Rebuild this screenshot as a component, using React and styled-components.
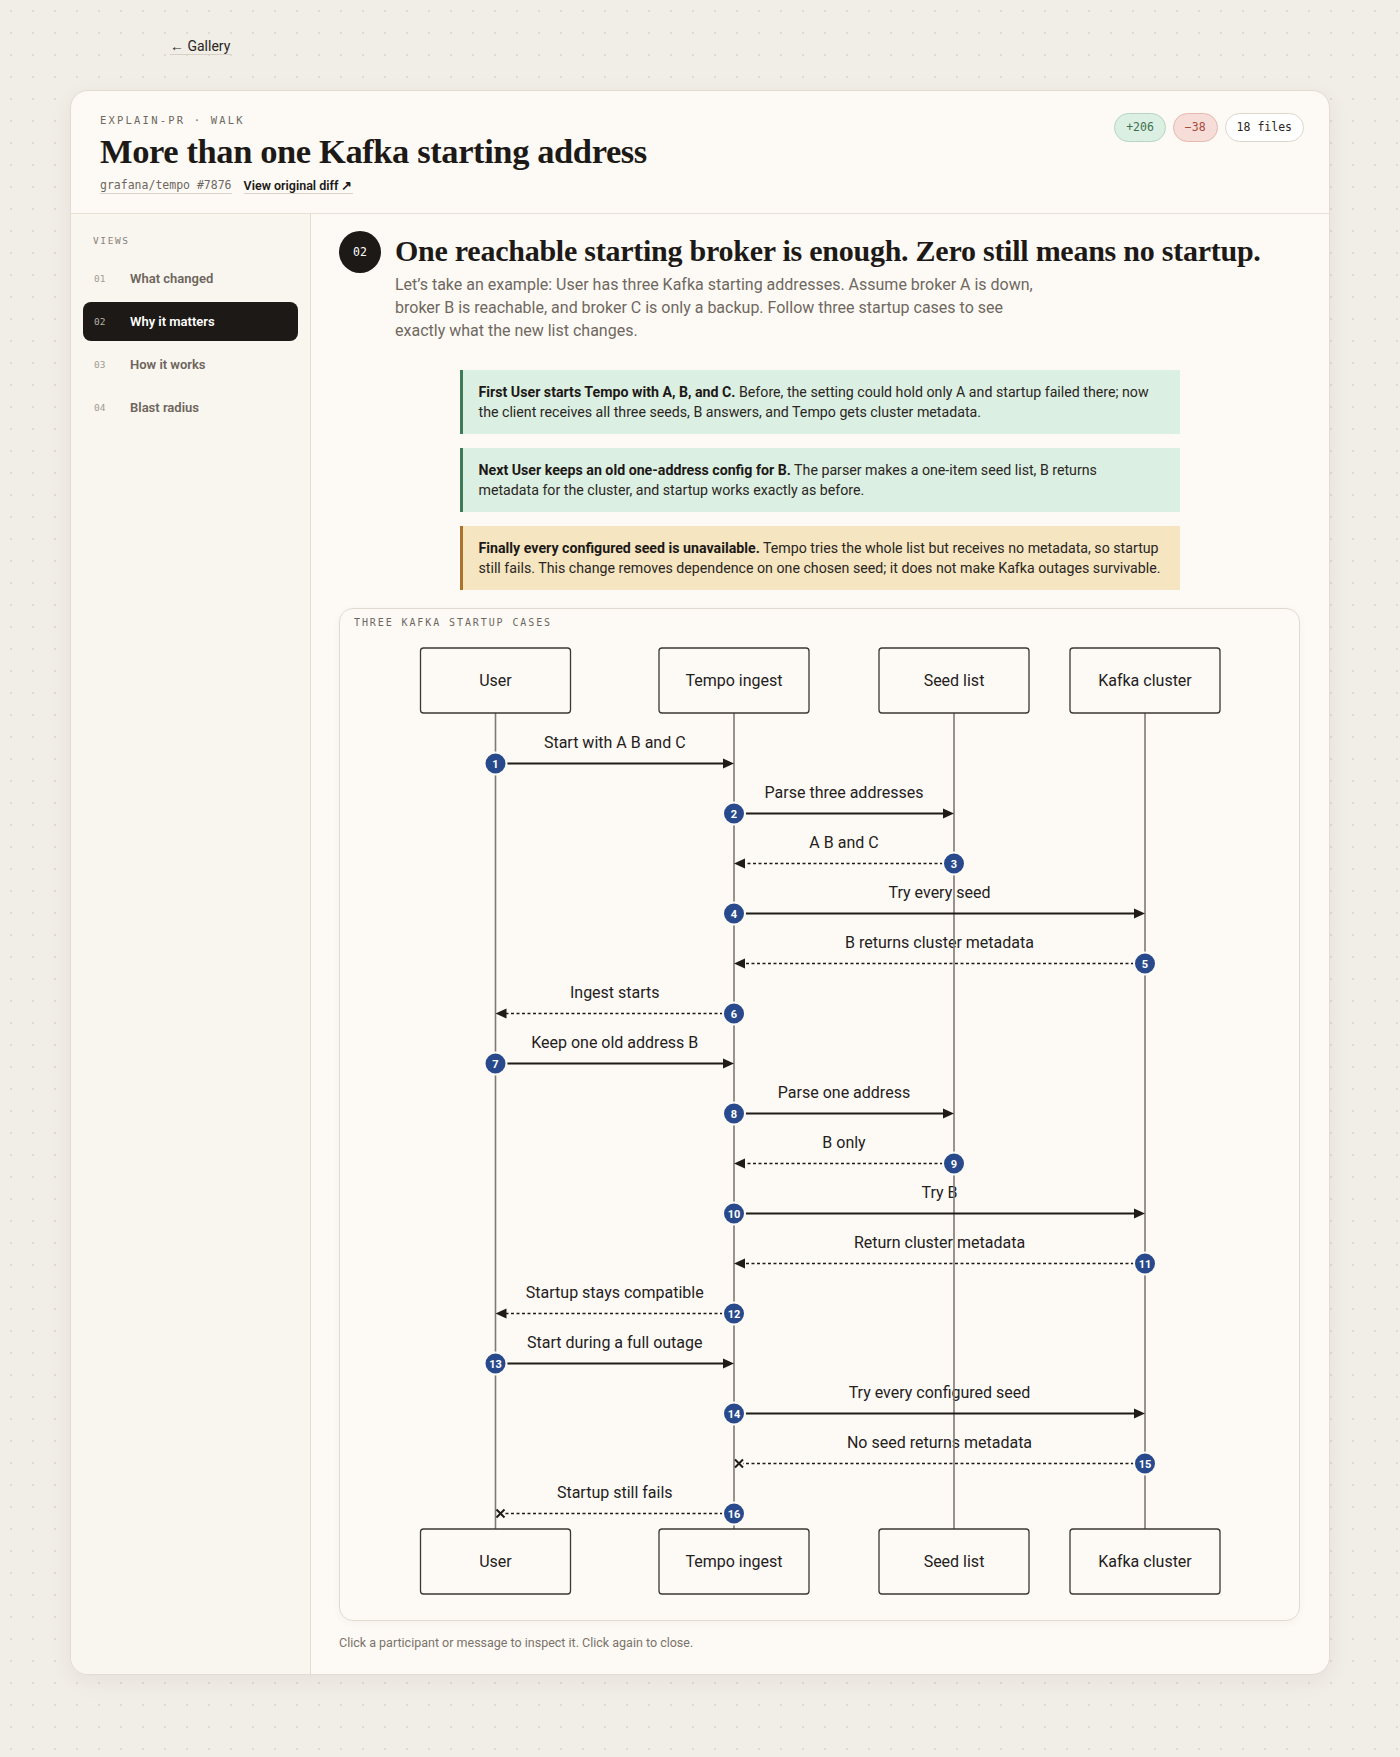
import React from "react";
import styled, { createGlobalStyle } from "styled-components";

const SANS = `"Roboto", "Noto Sans", sans-serif`;
const MONO = `"DejaVu Sans Mono", "Liberation Mono", monospace`;
const SERIF = `"Liberation Serif", "DejaVu Serif", serif`;

const GlobalStyle = createGlobalStyle`
  * { box-sizing: border-box; }
  html, body { margin: 0; padding: 0; }
  body {
    background-color: #f1ede7;
    background-image: radial-gradient(#e0dad1 1px, transparent 1.3px);
    background-size: 22px 22px;
    font-family: ${SANS};
    color: #1c1916;
  }
`;

const LANES = { user: 155.5, tempo: 394, seed: 614, kafka: 805 };

const PARTICIPANTS = [
  ["user", "User"],
  ["tempo", "Tempo ingest"],
  ["seed", "Seed list"],
  ["kafka", "Kafka cluster"],
];

const MESSAGES = [
  { from: "user", to: "tempo", text: "Start with A B and C" },
  { from: "tempo", to: "seed", text: "Parse three addresses" },
  { from: "seed", to: "tempo", text: "A B and C", dashed: true },
  { from: "tempo", to: "kafka", text: "Try every seed" },
  { from: "kafka", to: "tempo", text: "B returns cluster metadata", dashed: true },
  { from: "tempo", to: "user", text: "Ingest starts", dashed: true },
  { from: "user", to: "tempo", text: "Keep one old address B" },
  { from: "tempo", to: "seed", text: "Parse one address" },
  { from: "seed", to: "tempo", text: "B only", dashed: true },
  { from: "tempo", to: "kafka", text: "Try B" },
  { from: "kafka", to: "tempo", text: "Return cluster metadata", dashed: true },
  { from: "tempo", to: "user", text: "Startup stays compatible", dashed: true },
  { from: "user", to: "tempo", text: "Start during a full outage" },
  { from: "tempo", to: "kafka", text: "Try every configured seed" },
  { from: "kafka", to: "tempo", text: "No seed returns metadata", dashed: true, lost: true },
  { from: "tempo", to: "user", text: "Startup still fails", dashed: true, lost: true },
];

const VIEWS = [
  ["01", "What changed"],
  ["02", "Why it matters"],
  ["03", "How it works"],
  ["04", "Blast radius"],
];

const CASES = [
  {
    tone: "green",
    lead: "First User starts Tempo with A, B, and C.",
    body: [" Before, the setting could hold only A and startup failed there; now the client receives all three seeds, B answers, and Tempo gets cluster metadata."],
  },
  {
    tone: "green",
    lead: "Next User keeps an old one-address config for B.",
    body: [" The parser makes a one-item seed list, B returns", "metadata for the cluster, and startup works exactly as before."],
  },
  {
    tone: "amber",
    lead: "Finally every configured seed is unavailable.",
    body: [" Tempo tries the whole list but receives no metadata, so startup still fails. This change removes dependence on one chosen seed; it does not make Kafka outages survivable."],
  },
];

const msgY = (i) => 125.5 + i * 50;

const SequenceDiagram = () => (
  <svg width="959" height="966" viewBox="0 0 959 966">
    {MESSAGES.map((m, i) => (
      <MsgLabel key={"l" + i} x={(LANES[m.from] + LANES[m.to]) / 2} y={msgY(i) - 15.5}>
        {m.text}
      </MsgLabel>
    ))}

    {PARTICIPANTS.map(([id]) => (
      <line key={"life" + id} x1={LANES[id]} y1={75} x2={LANES[id]} y2={891} stroke="#7f7971" strokeWidth="1.6" />
    ))}

    {[10, 891].map((top) =>
      PARTICIPANTS.map(([id, name]) => (
        <g key={id + top}>
          <rect x={LANES[id] - 75} y={top} width="150" height="65" rx="3" fill="#fdfaf5" stroke="#3b3733" strokeWidth="1.3" />
          <ActorLabel x={LANES[id]} y={top + 38}>
            {name}
          </ActorLabel>
        </g>
      ))
    )}

    {MESSAGES.map((m, i) => {
      const y = msgY(i);
      const x1 = LANES[m.from];
      const x2 = LANES[m.to];
      const dir = x2 > x1 ? 1 : -1;
      const start = x1 + dir * 11;
      const cx = x2 - dir * 5;
      const end = m.lost ? cx - dir * 4 : x2 - dir * 10;
      return (
        <g key={"m" + i}>
          <line
            x1={start}
            y1={y}
            x2={end}
            y2={y}
            stroke="#1f1b17"
            strokeWidth={m.dashed ? 1.7 : 1.8}
            strokeDasharray={m.dashed ? "3 2.5" : undefined}
          />
          {m.lost ? (
            <path
              d={`M${cx - 4} ${y - 4} L${cx + 4} ${y + 4} M${cx - 4} ${y + 4} L${cx + 4} ${y - 4}`}
              stroke="#1f1b17"
              strokeWidth="2"
            />
          ) : (
            <polygon points={`${x2},${y} ${x2 - dir * 11},${y - 5} ${x2 - dir * 11},${y + 5}`} fill="#1f1b17" />
          )}
          <circle cx={x1} cy={y} r="11" fill="#284a8c" stroke="#fdfaf5" strokeWidth="2" />
          <StepNum x={x1} y={y + 4}>
            {i + 1}
          </StepNum>
        </g>
      );
    })}
  </svg>
);

const App = () => (
  <>
    <GlobalStyle />
    <TopBar>
      <BackLink href="#">← Gallery</BackLink>
    </TopBar>
    <Card>
      <Header>
        <div>
          <Eyebrow>EXPLAIN-PR · WALK</Eyebrow>
          <Title>More than one Kafka starting address</Title>
          <MetaRow>
            <RepoRef>grafana/tempo #7876</RepoRef>
            <DiffLink href="#">View original diff ↗</DiffLink>
          </MetaRow>
        </div>
        <Badges>
          <Badge tone="add">+206</Badge>
          <Badge tone="del">−38</Badge>
          <Badge>18 files</Badge>
        </Badges>
      </Header>
      <Body>
        <Sidebar>
          <SideLabel>VIEWS</SideLabel>
          <NavList>
            {VIEWS.map(([num, label]) => (
              <NavItem key={num} active={num === "02"}>
                <NavNum active={num === "02"}>{num}</NavNum>
                {label}
              </NavItem>
            ))}
          </NavList>
        </Sidebar>
        <Main>
          <StepRow>
            <StepBadge>02</StepBadge>
            <div>
              <Heading>One reachable starting broker is enough. Zero still means no startup.</Heading>
              <Lede>
                Let’s take an example: User has three Kafka starting addresses. Assume broker A is down,
                broker B is reachable, and broker C is only a backup. Follow three startup cases to see
                exactly what the new list changes.
              </Lede>
            </div>
          </StepRow>
          <Cases>
            {CASES.map((c, i) => (
              <Callout key={i} tone={c.tone}>
                <strong>{c.lead}</strong>
                {c.body.map((part, j) => (
                  <React.Fragment key={j}>
                    {j > 0 && <br />}
                    {part}
                  </React.Fragment>
                ))}
              </Callout>
            ))}
          </Cases>
          <DiagramBox>
            <DiagramLabel>THREE KAFKA STARTUP CASES</DiagramLabel>
            <SequenceDiagram />
          </DiagramBox>
          <Hint>Click a participant or message to inspect it. Click again to close.</Hint>
        </Main>
      </Body>
    </Card>
  </>
);

const TopBar = styled.div`
  width: 1060px;
  margin: 0 auto;
  padding-top: 36px;
  height: 58px;
`;

const BackLink = styled.a`
  font-size: 14px;
  line-height: 20px;
  color: #2a2622;
  text-decoration: none;
  border-bottom: 1px solid #d6d0c6;
`;

const Card = styled.div`
  width: 1260px;
  margin: 32px auto 80px;
  background: #fdfaf5;
  border: 1px solid #e2dcd3;
  border-radius: 18px;
  box-shadow: 0 6px 24px rgba(60, 45, 30, 0.06);
  overflow: hidden;
`;

const Header = styled.div`
  display: flex;
  justify-content: space-between;
  align-items: flex-start;
  padding: 22px 25px 18px 29px;
  border-bottom: 1px solid #e6e0d7;
`;

const Eyebrow = styled.div`
  font-family: ${MONO};
  font-size: 10.5px;
  line-height: 14px;
  letter-spacing: 2.2px;
  color: #6d675f;
`;

const Title = styled.h1`
  margin: 4px 0 0;
  font-family: ${SERIF};
  font-weight: 700;
  font-size: 34.5px;
  line-height: 40px;
  letter-spacing: -0.4px;
  color: #1c1916;
`;

const MetaRow = styled.div`
  display: flex;
  align-items: center;
  gap: 12px;
  margin-top: 6px;
  height: 18px;
`;

const RepoRef = styled.span`
  font-family: ${MONO};
  font-size: 11.5px;
  color: #6d675f;
  border-bottom: 1px solid #d8d2c8;
  line-height: 15px;
`;

const DiffLink = styled.a`
  font-size: 12.5px;
  font-weight: 600;
  color: #1c1916;
  text-decoration: none;
  border-bottom: 1px solid #d8d2c8;
  line-height: 15px;
`;

const Badges = styled.div`
  display: flex;
  gap: 7px;
`;

const badgeTones = {
  add: { bg: "#dcefe3", border: "#b5d5c1", color: "#3e6f50" },
  del: { bg: "#f6ddd8", border: "#e6b8af", color: "#a84b3d" },
  plain: { bg: "#ffffff", border: "#dcd6cc", color: "#2a2622" },
};

const Badge = styled.span`
  font-family: ${MONO};
  font-size: 11.5px;
  line-height: 27px;
  padding: 0 11px;
  border-radius: 999px;
  background: ${(p) => badgeTones[p.tone || "plain"].bg};
  border: 1px solid ${(p) => badgeTones[p.tone || "plain"].border};
  color: ${(p) => badgeTones[p.tone || "plain"].color};
`;

const Body = styled.div`
  display: grid;
  grid-template-columns: 240px 1fr;
`;

const Sidebar = styled.aside`
  background: #f9f5ef;
  border-right: 1px solid #e2dcd3;
  padding: 20px 12px;
`;

const SideLabel = styled.div`
  font-family: ${MONO};
  font-size: 9.5px;
  line-height: 14px;
  letter-spacing: 1.6px;
  color: #8a837a;
  padding-left: 10px;
`;

const NavList = styled.div`
  display: flex;
  flex-direction: column;
  gap: 4px;
  margin-top: 11px;
`;

const NavItem = styled.div`
  display: flex;
  align-items: center;
  height: 39px;
  padding: 0 11px;
  border-radius: 8px;
  font-size: 13px;
  font-weight: 600;
  background: ${(p) => (p.active ? "#1c1916" : "transparent")};
  color: ${(p) => (p.active ? "#ffffff" : "#6d655c")};
`;

const NavNum = styled.span`
  width: 36px;
  font-family: ${MONO};
  font-size: 9.5px;
  font-weight: 400;
  color: ${(p) => (p.active ? "#b8b1a7" : "#a39c92")};
`;

const Main = styled.main`
  padding: 17px 29px 23px 28px;
`;

const StepRow = styled.div`
  display: flex;
  gap: 14px;
`;

const StepBadge = styled.div`
  flex: none;
  width: 42px;
  height: 42px;
  border-radius: 50%;
  background: #1c1916;
  color: #fff;
  font-family: ${MONO};
  font-size: 11.5px;
  display: flex;
  align-items: center;
  justify-content: center;
`;

const Heading = styled.h2`
  margin: 2px 0 0;
  font-family: ${SERIF};
  font-weight: 700;
  font-size: 30px;
  line-height: 36px;
  letter-spacing: -0.25px;
  color: #1c1916;
`;

const Lede = styled.p`
  margin: 4px 0 0;
  max-width: 640px;
  font-size: 16px;
  line-height: 23px;
  color: #6f685f;
`;

const Cases = styled.div`
  display: flex;
  flex-direction: column;
  gap: 14px;
  width: 720px;
  margin: 28px auto 0;
`;

const Callout = styled.div`
  padding: 12px 16px;
  font-size: 14.2px;
  line-height: 20px;
  color: #2a2622;
  background: ${(p) => (p.tone === "amber" ? "#f5e5c1" : "#dcefe3")};
  border-left: 3px solid ${(p) => (p.tone === "amber" ? "#a8742a" : "#3f7a57")};

  strong {
    font-weight: 700;
    color: #1c1916;
  }
`;

const DiagramBox = styled.div`
  margin-top: 18px;
  background: #fdfaf5;
  border: 1px solid #e0dad1;
  border-radius: 14px;
  padding-bottom: 16px;
  box-shadow: 0 2px 10px rgba(60, 45, 30, 0.04);

  svg {
    display: block;
    margin-top: 8px;
  }
`;

const DiagramLabel = styled.div`
  padding: 7px 14px 0;
  font-family: ${MONO};
  font-size: 10px;
  line-height: 14px;
  letter-spacing: 1.9px;
  color: #6d675f;
`;

const Hint = styled.div`
  margin-top: 14px;
  font-size: 12.5px;
  line-height: 16px;
  color: #7a736a;
`;

const MsgLabel = styled.text`
  font-family: ${SANS};
  font-size: 16px;
  fill: #24201c;
  text-anchor: middle;
`;

const ActorLabel = styled.text`
  font-family: ${SANS};
  font-size: 16px;
  fill: #24201c;
  text-anchor: middle;
`;

const StepNum = styled.text`
  font-family: ${SANS};
  font-size: 11px;
  font-weight: 700;
  fill: #ffffff;
  text-anchor: middle;
`;

export default App;
